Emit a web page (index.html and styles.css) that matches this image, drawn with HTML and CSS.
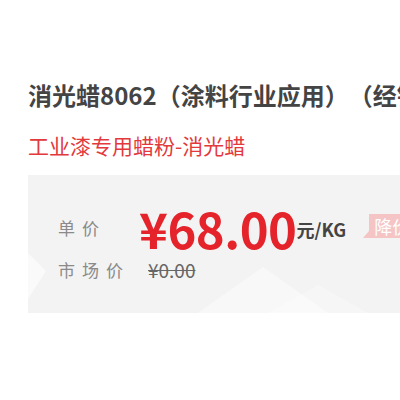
FILE: index.html
```html
<!DOCTYPE html>
<html lang="zh">
<head>
<meta charset="utf-8">
<link rel="stylesheet" href="styles.css">
</head>
<body>
<div class="page">
  <h1 class="title">消光蜡8062（涂料行业应用）（经销商）</h1>
  <p class="subtitle">工业漆专用蜡粉-消光蜡</p>
  <div class="pricebox">
    <svg class="wm" viewBox="0 0 372 138" preserveAspectRatio="none">
      <polygon points="0,78 18,96 0,124" fill="#ffffff" opacity="0.6"/>
      <polygon points="170,138 235,92 300,138" fill="#ffffff" opacity="0.45"/>
      <polygon points="240,138 290,110 340,138" fill="#ffffff" opacity="0.3"/>
    </svg>
    <div class="row row-price">
      <span class="label">单价</span>
      <span class="price">¥68.00</span>
      <span class="unit">元/KG</span>
      <span class="badge">降价通知</span>
    </div>
    <div class="row row-market">
      <span class="label">市场价</span>
      <span class="old">¥0.00</span>
    </div>
  </div>
</div>
</body>
</html>
```
FILE: styles.css
```css
html, body {
  margin: 0;
  padding: 0;
  background: #fff;
  overflow: hidden;
}
.page {
  width: 400px;
  height: 400px;
  overflow: hidden;
  padding: 78px 0 0 28px;
  box-sizing: border-box;
  font-family: "Microsoft YaHei", "Noto Sans CJK SC", sans-serif;
  white-space: nowrap;
  text-spacing-trim: space-all;
}
.title {
  margin: 0;
  font-size: 24px;
  line-height: 34px;
  font-weight: bold;
  color: #444;
}
.subtitle {
  margin: 19px 0 0 0;
  font-size: 21px;
  line-height: 28px;
  color: #e3393c;
}
.pricebox {
  position: relative;
  margin-top: 16px;
  width: 372px;
  height: 138px;
  background: #f3f3f3;
  padding: 27px 0 0 30px;
  box-sizing: border-box;
}
.wm {
  position: absolute;
  left: 0;
  top: 0;
  width: 100%;
  height: 100%;
}
.row {
  position: relative;
  display: flex;
  align-items: center;
}
.label {
  flex: none;
  width: 90px;
  font-size: 17px;
  line-height: 24px;
  letter-spacing: 7px;
  color: #8a8a8a;
}
.price {
  flex: none;
  margin-left: -9px;
  font-size: 49px;
  line-height: 52px;
  font-weight: bold;
  color: #e4232b;
  letter-spacing: -0.5px;
}
.unit {
  flex: none;
  margin-top: 2px;
  font-size: 18px;
  font-weight: bold;
  color: #444;
}
.badge {
  flex: none;
  position: relative;
  margin-left: 23px;
  margin-top: -4px;
  background: #f5c4c5;
  color: #fff;
  font-size: 18px;
  line-height: 24px;
  padding: 0 5px;
}
.badge::before {
  content: "";
  position: absolute;
  left: -6px;
  bottom: 0;
  border-right: 6px solid #f5c4c5;
  border-top: 7px solid transparent;
}
.row-market {
  margin-top: 4px;
}
.old {
  flex: none;
  font-size: 19px;
  line-height: 24px;
  color: #666;
  text-decoration: line-through;
}
```
